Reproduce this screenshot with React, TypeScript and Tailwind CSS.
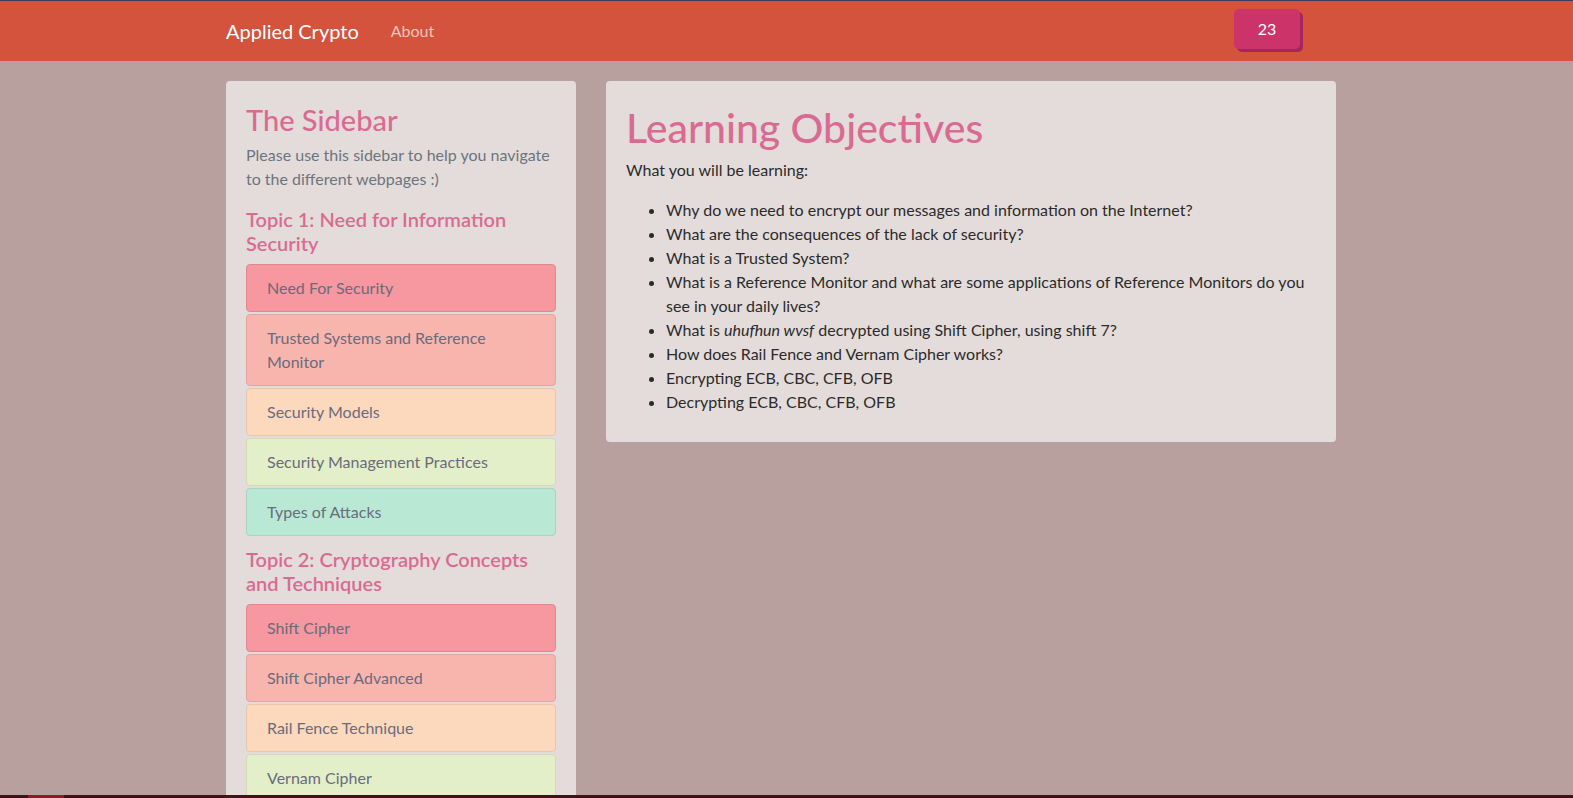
import React from 'react';

const font = { fontFamily: 'Lato, "Noto Sans", sans-serif' };

const topics = [
  {
    title: 'Topic 1: Need for Information Security',
    links: [
      'Need For Security',
      'Trusted Systems and Reference Monitor',
      'Security Models',
      'Security Management Practices',
      'Types of Attacks',
    ],
  },
  {
    title: 'Topic 2: Cryptography Concepts and Techniques',
    links: ['Shift Cipher', 'Shift Cipher Advanced', 'Rail Fence Technique', 'Vernam Cipher'],
  },
];

const tones = [
  'bg-[#f7979f] border-[#e08890]',
  'bg-[#f8b5ae] border-[#e4a49e]',
  'bg-[#fcd9bd] border-[#e8c6ac]',
  'bg-[#e3efc9] border-[#cfdcb6]',
  'bg-[#b9e9d5] border-[#a6d5c1]',
];

function Sidebar() {
  return (
    <aside className="w-[350px] shrink-0 self-start rounded-[4px] bg-[#e4dcdb] p-5">
      <h3 className="mt-[2px] mb-[5px] text-[29px] leading-[1.2] font-medium text-[#d96b92]">The Sidebar</h3>
      <p className="mb-4 text-base leading-6 text-[#6c757d]">
        Please use this sidebar to help you navigate to the different webpages :)
      </p>
      {topics.map((topic, t) => (
        <div key={t} className="mb-[11px]">
          <h4 className="mb-[9px] text-[20px] leading-6 font-semibold text-[#d96b92]">{topic.title}</h4>
          <div className="flex flex-col gap-[2px]">
            {topic.links.map((link, i) => (
              <a
                key={link}
                href="#"
                className={`block rounded-[4px] border px-5 py-[11px] text-base leading-6 text-[#6a6b7d] ${tones[i % tones.length]}`}
              >
                {link}
              </a>
            ))}
          </div>
        </div>
      ))}
    </aside>
  );
}

function Objectives() {
  return (
    <section className="flex-1 self-start rounded-[4px] bg-[#e4dcdb] px-5 pt-[22px] pb-[12px]">
      <h1 className="mb-[6px] text-[41px] leading-[1.2] font-medium text-[#d96b92]">Learning Objectives</h1>
      <p className="mb-4 text-base leading-6 text-[#2b2b2b]">What you will be learning:</p>
      <ul className="mb-4 list-disc pl-10 text-base leading-6 text-[#2b2b2b]">
        <li>Why do we need to encrypt our messages and information on the Internet?</li>
        <li>What are the consequences of the lack of security?</li>
        <li>What is a Trusted System?</li>
        <li>
          What is a Reference Monitor and what are some applications of Reference Monitors do you see in your daily
          lives?
        </li>
        <li>
          What is <em>uhufhun wvsf</em> decrypted using Shift Cipher, using shift 7?
        </li>
        <li>How does Rail Fence and Vernam Cipher works?</li>
        <li>Encrypting ECB, CBC, CFB, OFB</li>
        <li>Decrypting ECB, CBC, CFB, OFB</li>
      </ul>
    </section>
  );
}

export default function App() {
  return (
    <div className="min-h-screen bg-[#b8a09f]" style={font}>
      <nav className="h-[61px] border-t border-[#3e3a5a] bg-[#d4533c] pr-[11px]">
        <div className="mx-auto flex h-full w-[1140px] items-center px-[15px]">
          <a href="#" className="text-[20px] leading-[30px] text-white">
            Applied Crypto
          </a>
          <a href="#" className="ml-8 text-base text-[#f1c4b8]">
            About
          </a>
          <div className="mt-[-4px] mr-[36px] ml-auto flex h-[40px] w-[66px] items-center justify-center rounded-[5px] bg-[#cc3369] text-base text-white shadow-[3px_3px_0_#a8245a]">
            23
          </div>
        </div>
      </nav>
      <main className="pr-[11px] pt-5">
        <div className="mx-auto flex w-[1140px] gap-[30px] px-[15px]">
          <Sidebar />
          <Objectives />
        </div>
      </main>
      <div className="fixed right-0 bottom-0 left-0 flex h-[3px] bg-[#3f1317]">
        <div className="ml-[28px] w-[36px] bg-[#8a1b24]" />
      </div>
    </div>
  );
}
